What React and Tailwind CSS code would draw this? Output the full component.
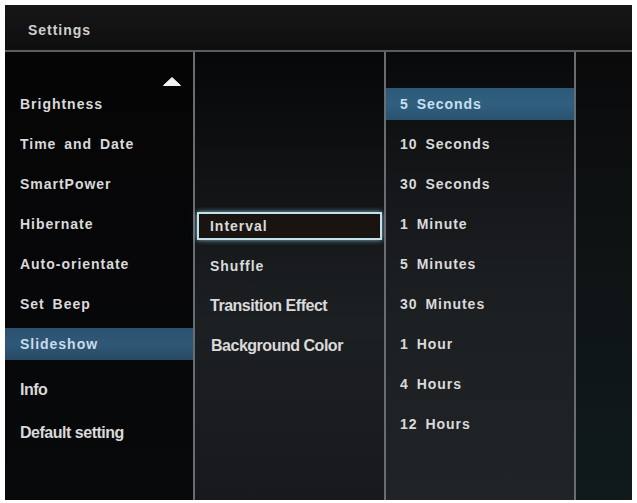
import React from "react";

const tv = "font-['Liberation_Sans',Arial,sans-serif] font-bold text-[14px] tracking-[0.07em] [word-spacing:3px]";
const bold = "font-['Liberation_Sans',Arial,sans-serif] font-bold text-[16px] tracking-[-0.03em]";

const mainMenu = [
  { label: "Brightness", style: tv },
  { label: "Time and Date", style: tv },
  { label: "SmartPower", style: tv },
  { label: "Hibernate", style: tv },
  { label: "Auto-orientate", style: tv },
  { label: "Set Beep", style: tv },
  { label: "Slideshow", style: tv, active: true },
];

const intervals = [
  "5 Seconds",
  "10 Seconds",
  "30 Seconds",
  "1 Minute",
  "5 Minutes",
  "30 Minutes",
  "1 Hour",
  "4 Hours",
  "12 Hours",
];

function Divider() {
  return <div className="w-[2px] shrink-0 bg-[#6a6d70]" />;
}

export default function App() {
  return (
    <div className="w-[637px] h-[503px] bg-white pt-[5px] pl-[5px]">
      <div className="w-[627px] h-[495px] bg-black flex flex-col overflow-hidden text-[#dadada]">
        {/* title bar */}
        <div className="h-[45px] shrink-0 flex items-center pt-[5px] pl-[23px] bg-[linear-gradient(to_bottom,#161616,#0f0f0f)]">
          <span className={tv + " text-[13.5px] text-[#cfcfcf]"}>Settings</span>
        </div>
        <div className="h-[2px] shrink-0 bg-[#5a5c5e]" />

        <div className="flex flex-1 min-h-0">
          {/* main menu */}
          <div className="w-[188px] shrink-0 flex flex-col bg-[linear-gradient(to_bottom,#050506,#08090b)]">
            <div className="h-[34px] flex items-end justify-end pr-[12px]">
              <svg width="18" height="9" viewBox="0 0 18 9">
                <path d="M9 0.5 L17.5 8.5 L0.5 8.5 Z" fill="#f2f2f2" strokeLinejoin="round" stroke="#f2f2f2" strokeWidth="1" />
              </svg>
            </div>
            <div className="flex flex-col gap-[8px] mt-[2px]">
              {mainMenu.map((m) => (
                <div
                  key={m.label}
                  className={
                    "h-[32px] flex items-center pl-[15px] " +
                    (m.active ? "bg-[linear-gradient(to_bottom,#2c5270,#2f5877,#284a64)] text-[#c9dcea]" : "")
                  }
                >
                  <span className={m.style}>{m.label}</span>
                </div>
              ))}
            </div>
            <div className="h-[32px] mt-[14px] flex items-center pl-[15px]">
              <span className={bold}>Info</span>
            </div>
            <div className="h-[32px] mt-[11px] flex items-center pl-[15px]">
              <span className={bold}>Default setting</span>
            </div>
          </div>
          <Divider />

          {/* slideshow submenu */}
          <div className="w-[189px] shrink-0 flex flex-col pt-[154px] bg-[linear-gradient(to_bottom,#060708,#111315_30%,#1d2023_60%,#17191c)]">
            <div className="h-[40px] flex items-center px-[2px]">
              <div className="h-[28px] w-full flex items-center pl-[11px] border-2 border-[#c3e2ec] bg-[#1a1410] shadow-[0_0_5px_#7fb6c9]">
                <span className={tv}>Interval</span>
              </div>
            </div>
            <div className="h-[40px] flex items-center pl-[15px]">
              <span className={tv}>Shuffle</span>
            </div>
            <div className="h-[40px] flex items-center pl-[15px]">
              <span className={bold}>Transition Effect</span>
            </div>
            <div className="h-[40px] flex items-center pl-[16px]">
              <span className={bold}>Background Color</span>
            </div>
          </div>
          <Divider />

          {/* interval options */}
          <div className="w-[188px] shrink-0 flex flex-col pt-[36px] gap-[8px] bg-[linear-gradient(to_bottom,#08090b,#131517_25%,#1c1f22_55%,#212427)]">
            {intervals.map((t, i) => (
              <div
                key={t}
                className={
                  "h-[32px] flex items-center pl-[14px] " +
                  (i === 0 ? "bg-[linear-gradient(to_bottom,#2d5878,#30607f,#2a5170)] text-[#c9e0ef]" : "")
                }
              >
                <span className={tv}>{t}</span>
              </div>
            ))}
          </div>
          <Divider />

          <div className="flex-1 bg-[linear-gradient(to_bottom,#0a0a0b,#0e1213_40%,#101a1b)]" />
        </div>
      </div>
    </div>
  );
}
